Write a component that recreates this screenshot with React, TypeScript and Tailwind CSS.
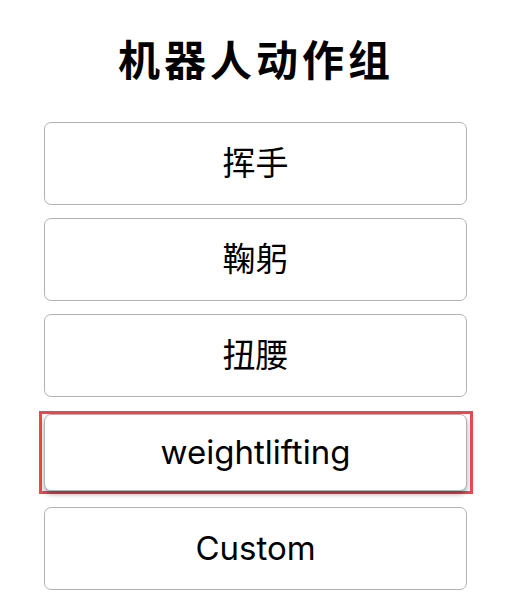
const actions = ["挥手", "鞠躬", "扭腰", "weightlifting", "Custom"];

const selected = "weightlifting";

export default function App() {
  return (
    <div
      className="min-h-screen bg-white text-black"
      style={{ fontFamily: 'Inter, "Noto Sans CJK SC", sans-serif' }}
    >
      <h1 className="pt-[33px] pl-[6px] text-center text-[42px] font-bold leading-[56px] tracking-[4px]">
        机器人动作组
      </h1>

      <div className="ml-[44px] mt-[33px] flex w-[423px] flex-col gap-[13px]">
        {actions.map((name) => {
          const active = name === selected;

          return (
            <div
              key={name}
              className={`h-[83px] ${
                active ? "-ml-[5px] -mr-[6px] mt-[1px] border-[3px] border-[#f0474a] pl-[2px] pr-[3px]" : ""
              }`}
            >
              <button
                type="button"
                className={`flex h-full w-full items-center justify-center rounded-[7px] border border-[#b3b3b3] bg-white text-[33px] ${
                  active ? "shadow-[0_3px_5px_rgba(0,0,0,0.35)]" : ""
                }`}
              >
                {name}
              </button>
            </div>
          );
        })}
      </div>
    </div>
  );
}
